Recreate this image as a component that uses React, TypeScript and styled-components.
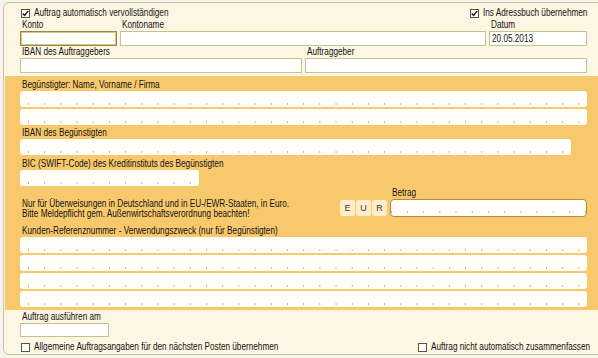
import * as React from 'react'
import styled, { createGlobalStyle, css } from 'styled-components'

const GlobalStyle = createGlobalStyle`
  html, body {
    margin: 0;
    padding: 0;
    overflow: hidden;
    background: #f6f4ee;
  }
  body {
    font-family: "Liberation Sans", Arial, sans-serif;
    font-size: 10px;
    color: #141414;
  }
`

// narrow face: the form uses a condensed sans, so squeeze the glyphs
const Txt = styled.span`
  display: inline-block;
  white-space: nowrap;
  transform: scaleX(0.82);
  transform-origin: 0 50%;
`

const Panel = styled.div`
  margin: 2px 0 0 3px;
  width: 606px;
  height: 353px;
  box-sizing: border-box;
  border: 1px solid #cdc29d;
  border-radius: 6px;
  background: #fdf6e2;
  display: flex;
  flex-direction: column;
`

const Section = styled.div`
  width: 567px;
  padding: 4px 0 3px 16px;
  display: flex;
  flex-direction: column;
`

const Band = styled.div`
  margin-left: 1px;
  height: 234px;
  box-sizing: border-box;
  padding: 3px 0 0 15px;
  background: #f7c96c;
`

const BandInner = styled.div`
  width: 567px;
  display: flex;
  flex-direction: column;
`

const CheckRow = styled.div<{ $split: number; $top?: number }>`
  display: grid;
  grid-template-columns: ${p => p.$split}px auto;
  align-items: center;
  height: 12px;
  margin-top: ${p => p.$top ?? 0}px;
`

const CheckItem = styled.label`
  display: flex;
  align-items: center;
  gap: 4px;
  margin-left: 1px;
  line-height: 12px;
`

const Box = styled.span`
  flex: none;
  width: 9px;
  height: 9px;
  box-sizing: border-box;
  border: 1px solid #55554d;
  background: #fffffa;
  display: flex;
  align-items: center;
  justify-content: center;
`

const FieldRow = styled.div<{ $cols: string }>`
  display: grid;
  grid-template-columns: ${p => p.$cols};
  column-gap: 3px;
`

const Field = styled.div<{ $top?: number }>`
  display: flex;
  flex-direction: column;
  margin-top: ${p => p.$top ?? 0}px;
`

const Label = styled.div`
  height: 12px;
  line-height: 12px;
  padding-left: 2px;
  white-space: nowrap;
`

const TextBox = styled.div<{ $focus?: boolean; $w?: number; $h?: number }>`
  height: ${p => p.$h ?? 15}px;
  box-sizing: border-box;
  border: 1px solid #c8bf96;
  background: #fffffb;
  padding: 0 2px;
  line-height: 13px;
  ${p => p.$w && css`width: ${p.$w}px;`}
  ${p =>
    p.$focus &&
    css`
      border-color: #9c8443;
      box-shadow: inset 0 0 0 1px #d6c48a;
    `}
`

const ticks = css`
  background-color: #fffefa;
  background-image: linear-gradient(to right, #cfb57c 0 1px, transparent 1px);
  background-size: 16.2px 2px;
  background-repeat: repeat-x;
  background-position: 8px calc(100% - 2px);
`

const Slot = styled.div<{ $w?: number; $gap?: number }>`
  ${ticks}
  height: 16px;
  border-radius: 3px;
  width: ${p => (p.$w ? `${p.$w}px` : '100%')};
  margin-top: ${p => p.$gap ?? 0}px;
`

const MiddleRow = styled.div`
  display: flex;
  align-items: flex-start;
  margin-top: 1px;
`

const Notice = styled.div`
  flex: 1 1 0;
  min-width: 0;
  padding: 12px 0 0 2px;
  line-height: 10px;
  display: flex;
  flex-direction: column;
  align-items: flex-start;
`

const AmountGroup = styled.div`
  flex: none;
  display: flex;
  align-items: flex-end;
`

const Currency = styled.div`
  display: flex;
  gap: 1px;
  margin: 0 3px 1px 0;
`

const CurrencyKey = styled.span`
  width: 15px;
  height: 16px;
  border-radius: 2px;
  background: #fcefc9;
  color: #3a3a3a;
  display: flex;
  align-items: center;
  justify-content: center;
  font-size: 9px;
`

const AmountBox = styled.div`
  ${ticks}
  width: 197px;
  height: 18px;
  box-sizing: border-box;
  border: 1.5px solid #b38c36;
  border-radius: 4px;
  background-position: 16px calc(100% - 3px);
`

const Bottom = styled.div`
  width: 567px;
  padding: 1px 0 0 16px;
  display: flex;
  flex-direction: column;
`

function Check({ checked, children }: { checked?: boolean; children: React.ReactNode }) {
  return (
    <CheckItem>
      <Box>
        {checked && (
          <svg width="7" height="7" viewBox="0 0 7 7">
            <path d="M0.8 3.4 L2.6 5.4 L6.2 0.9" fill="none" stroke="#1e1e1e" strokeWidth="1.5" />
          </svg>
        )}
      </Box>
      <Txt>{children}</Txt>
    </CheckItem>
  )
}

export default function App() {
  return (
    <>
      <GlobalStyle />
      <Panel>
        <Section>
          <CheckRow $split={449}>
            <Check checked>Auftrag automatisch vervollständigen</Check>
            <Check checked>Ins Adressbuch übernehmen</Check>
          </CheckRow>
          <FieldRow $cols="97px 366px 98px">
            <Field>
              <Label><Txt>Konto</Txt></Label>
              <TextBox $focus />
            </Field>
            <Field>
              <Label><Txt>Kontoname</Txt></Label>
              <TextBox />
            </Field>
            <Field>
              <Label><Txt>Datum</Txt></Label>
              <TextBox><Txt>20.05.2013</Txt></TextBox>
            </Field>
          </FieldRow>
          <FieldRow $cols="282px 282px">
            <Field>
              <Label><Txt>IBAN des Auftraggebers</Txt></Label>
              <TextBox />
            </Field>
            <Field>
              <Label><Txt>Auftraggeber</Txt></Label>
              <TextBox />
            </Field>
          </FieldRow>
        </Section>

        <Band>
          <BandInner>
            <Field>
              <Label><Txt>Begünstigter: Name, Vorname / Firma</Txt></Label>
              <Slot />
              <Slot $gap={2} />
            </Field>
            <Field $top={2}>
              <Label><Txt>IBAN des Begünstigten</Txt></Label>
              <Slot $w={551} />
            </Field>
            <Field $top={3}>
              <Label><Txt>BIC (SWIFT-Code) des Kreditinstituts des Begünstigten</Txt></Label>
              <Slot $w={179} />
            </Field>
            <MiddleRow>
              <Notice>
                <Txt>Nur für Überweisungen in Deutschland und in EU-/EWR-Staaten, in Euro.</Txt>
                <Txt>Bitte Meldepflicht gem. Außenwirtschaftsverordnung beachten!</Txt>
              </Notice>
              <AmountGroup>
                <Currency>
                  <CurrencyKey>E</CurrencyKey>
                  <CurrencyKey>U</CurrencyKey>
                  <CurrencyKey>R</CurrencyKey>
                </Currency>
                <Field>
                  <Label><Txt>Betrag</Txt></Label>
                  <AmountBox />
                </Field>
              </AmountGroup>
            </MiddleRow>
            <Field $top={6}>
              <Label><Txt>Kunden-Referenznummer - Verwendungszweck (nur für Begünstigten)</Txt></Label>
              <Slot />
              <Slot $gap={2} />
              <Slot $gap={2} />
              <Slot $gap={2} />
            </Field>
          </BandInner>
        </Band>

        <Bottom>
          <Field>
            <Label><Txt>Auftrag ausführen am</Txt></Label>
            <TextBox $w={89} $h={14} />
          </Field>
          <CheckRow $split={397} $top={4}>
            <Check>Allgemeine Auftragsangaben für den nächsten Posten übernehmen</Check>
            <Check>Auftrag nicht automatisch zusammenfassen</Check>
          </CheckRow>
        </Bottom>
      </Panel>
    </>
  )
}
